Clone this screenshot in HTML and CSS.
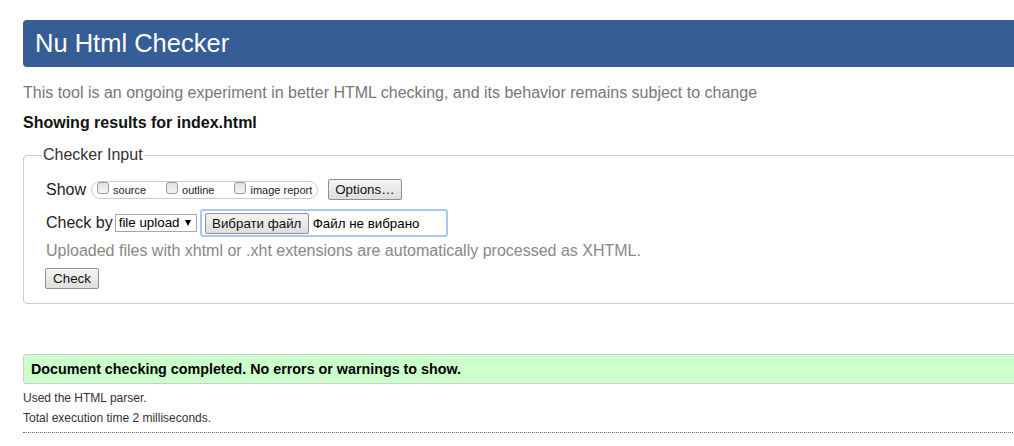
FILE: index.html
```html
<!DOCTYPE html>
<html lang="en">
<head>
<meta charset="utf-8">
<title>Nu Html Checker</title>
<link rel="stylesheet" href="styles.css">
</head>
<body>
<div class="page">
  <h1 class="banner">Nu Html Checker</h1>
  <p class="tagline">This tool is an ongoing experiment in better HTML checking, and its behavior remains subject to change</p>
  <p class="showing">Showing results for index.html</p>

  <fieldset class="checker">
    <legend class="checker-legend">Checker Input</legend>
    <div class="checker-body">
      <div class="row show-row">
        <span class="row-label">Show</span>
        <span class="toggles">
          <label class="toggle"><input type="checkbox" class="cb"><span>source</span></label>
          <label class="toggle"><input type="checkbox" class="cb"><span>outline</span></label>
          <label class="toggle"><input type="checkbox" class="cb"><span>image report</span></label>
        </span>
        <button class="btn options-btn" type="button">Options…</button>
      </div>
      <div class="row check-row">
        <span class="row-label">Check by</span>
        <span class="select-wrap">
          <select class="select"><option>file upload</option></select>
        </span>
        <span class="file-box">
          <button class="btn file-btn" type="button">Вибрати файл</button>
          <span class="file-name">Файл не вибрано</span>
        </span>
      </div>
      <p class="note">Uploaded files with xhtml or .xht extensions are automatically processed as XHTML.</p>
      <button class="btn check-btn" type="submit">Check</button>
    </div>
  </fieldset>

  <p class="success">Document checking completed. No errors or warnings to show.</p>
  <p class="meta">Used the HTML parser.</p>
  <p class="meta">Total execution time 2 milliseconds.</p>
  <div class="rule"></div>
</div>
</body>
</html>
```

FILE: styles.css
```css
html, body {
  margin: 0;
  padding: 0;
  overflow: hidden;
  background: #fff;
}

body {
  font-family: "Liberation Sans", Arial, sans-serif;
  color: #333;
}

.page {
  width: 1120px;
  padding: 20px 0 0 23px;
}

.banner {
  margin: 0;
  height: 47px;
  line-height: 47px;
  padding-left: 12px;
  background: #365d95;
  color: #fff;
  font-size: 25.5px;
  font-weight: normal;
  border-radius: 4px;
}

.tagline {
  margin: 16px 0 0;
  font-size: 16px;
  line-height: 20px;
  color: #777;
}

.showing {
  margin: 10px 0 0;
  font-size: 16px;
  line-height: 20px;
  font-weight: bold;
  color: #111;
}

.checker {
  margin: 12px 0 0;
  padding: 0 0 14px 18px;
  border: 1px solid #ccc;
  border-radius: 4px;
  min-width: 0;
}

.checker-legend {
  padding: 0 1px;
  font-size: 16px;
  line-height: 20px;
  color: #333;
}

.checker-body {
  padding: 14px 0 0 4px;
}

.row {
  display: flex;
  align-items: center;
}

.row-label {
  font-size: 16px;
  line-height: 20px;
  color: #222;
}

.show-row {
  height: 21px;
}

.toggles {
  display: flex;
  align-items: center;
  margin-left: 5px;
  height: 16px;
  padding: 0 5px;
  border: 1px solid #ccc;
  border-radius: 9px;
}

.toggle {
  display: flex;
  align-items: flex-start;
  height: 16px;
  margin-right: 20px;
  font-size: 11px;
  line-height: 16px;
  color: #222;
}

.toggle:last-child {
  margin-right: 0;
}

.toggle span {
  margin-left: 4px;
}

.cb {
  appearance: none;
  -webkit-appearance: none;
  margin: 0;
  width: 12px;
  height: 12px;
  border: 1px solid #9a9a9a;
  border-radius: 3px;
  background: linear-gradient(#e2e2e2, #f6f6f6);
  box-sizing: border-box;
}

.btn {
  font-family: "Liberation Sans", Arial, sans-serif;
  font-size: 13.33px;
  color: #111;
  height: 21px;
  line-height: 19px;
  padding: 0 6px;
  border: 1px solid #8e8e8e;
  border-radius: 2px;
  background: linear-gradient(#f4f4f4, #dedede);
  box-sizing: border-box;
}

.options-btn {
  margin-left: 10px;
}

.check-row {
  margin-top: 9px;
  height: 28px;
}

.select-wrap {
  position: relative;
  margin-left: 2px;
}

.select-wrap::after {
  content: "";
  position: absolute;
  right: 6px;
  top: 6px;
  border-left: 3.5px solid transparent;
  border-right: 3.5px solid transparent;
  border-top: 6px solid #000;
}

.select {
  appearance: none;
  -webkit-appearance: none;
  display: block;
  width: 82px;
  height: 18px;
  margin: 0;
  padding: 0 0 0 3px;
  font-family: "Liberation Sans", Arial, sans-serif;
  font-size: 13.33px;
  line-height: 16px;
  color: #000;
  background: #fff;
  border: 1px solid #a6a6a6;
  border-radius: 0;
}

.file-box {
  display: flex;
  align-items: center;
  margin-left: 3px;
  width: 248px;
  height: 28px;
  padding: 0 0 0 3px;
  border: 2px solid #a8c7f8;
  border-radius: 3px;
  box-sizing: border-box;
}

.file-btn {
  width: 104px;
  padding: 0;
}

.file-name {
  margin-left: 4px;
  font-size: 13.33px;
  color: #000;
}

.note {
  margin: 4px 0 0;
  font-size: 16px;
  line-height: 20px;
  color: #888;
}

.check-btn {
  display: block;
  margin: 7px 0 0 -1px;
  width: 54px;
  padding: 0;
}

.success {
  margin: 50px 0 0;
  height: 28px;
  line-height: 28px;
  padding-left: 7px;
  background: #ccffcc;
  border: 1px solid #ccc;
  border-radius: 3px;
  font-size: 14.3px;
  font-weight: bold;
  color: #000;
}

.meta {
  margin: 0;
  font-size: 12px;
  line-height: 20px;
  color: #333;
}

.success + .meta {
  margin-top: 4px;
}

.rule {
  margin-top: 4px;
  border-top: 1px dotted #666;
}
```
